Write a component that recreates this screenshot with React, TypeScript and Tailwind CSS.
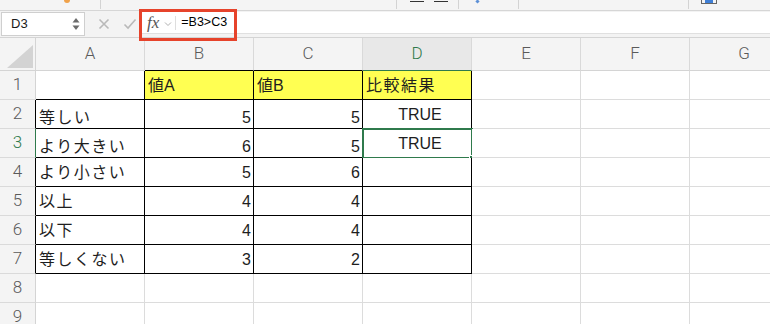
import React from "react";

type Cell = { text?: string; align?: "left" | "right" | "center"; yellow?: boolean; jp?: boolean };

const COLS = ["A", "B", "C", "D", "E", "F", "G"];

const DATA: Cell[][] = [
  [{}, { text: "値A", yellow: true }, { text: "値B", yellow: true }, { text: "比較結果", yellow: true, jp: true }],
  [{ text: "等しい", jp: true }, { text: "5", align: "right" }, { text: "5", align: "right" }, { text: "TRUE", align: "center" }],
  [{ text: "より大きい", jp: true }, { text: "6", align: "right" }, { text: "5", align: "right" }, { text: "TRUE", align: "center" }],
  [{ text: "より小さい", jp: true }, { text: "5", align: "right" }, { text: "6", align: "right" }, {}],
  [{ text: "以上", jp: true }, { text: "4", align: "right" }, { text: "4", align: "right" }, {}],
  [{ text: "以下", jp: true }, { text: "4", align: "right" }, { text: "4", align: "right" }, {}],
  [{ text: "等しくない", jp: true }, { text: "3", align: "right" }, { text: "2", align: "right" }, {}],
  [],
  [],
];

const inRegion = (r: number, c: number) =>
  (r === 0 && c >= 1 && c <= 3) || (r >= 1 && r <= 6 && c >= 0 && c <= 3);

function Ribbon() {
  return (
    <div className="flex h-[11px] bg-[#f4f4f4] border-b border-[#d6d6d6]">
      <div className="w-[101px] h-[9px] border-r border-[#d3d3d3] flex">
        <div className="ml-[64px] w-[6px] h-[3px] rounded-b-full bg-[#f0a24a]" />
      </div>
      <div className="w-[296px] h-[9px] border-r border-[#d3d3d3]" />
      <div className="w-[62px] h-[9px] border-r border-[#d3d3d3] flex gap-[10px] pl-[13px] pt-[1px]">
        <div className="w-[14px] h-[1px] bg-[#333]" />
        <div className="w-[14px] h-[1px] bg-[#333]" />
      </div>
      <div className="w-[60px] h-[9px] border-r border-[#d3d3d3] flex">
        <div className="ml-[17px] w-[3px] h-[3px] bg-[#5b8fd6] rotate-45" />
      </div>
      <div className="w-[170px] h-[9px] border-r border-[#d3d3d3]" />
      <div className="flex-1 h-[9px] flex">
        <div className="ml-[12px] w-[16px] h-[4px] border-b border-l border-r border-[#666] flex justify-center">
          <div className="w-[8px] h-[3px] bg-[#3f7fd6]" />
        </div>
      </div>
    </div>
  );
}

function FormulaBar() {
  return (
    <div className="relative flex h-[27px] bg-[#f3f3f3] border-b border-[#d4d4d4]">
      <div className="ml-[1px] mt-[1px] w-[84px] h-[24px] bg-white border border-[#cfcfcf] flex items-center">
        <span className="pl-[9px] flex-1 text-[13px] text-[#1a1a1a] font-['Liberation_Sans',sans-serif]">D3</span>
        <svg width="8" height="14" viewBox="0 0 8 14" className="mr-[4px]">
          <polygon points="4,1 7.5,5.5 0.5,5.5" fill="#6b6b6b" />
          <polygon points="4,13 7.5,8.5 0.5,8.5" fill="#6b6b6b" />
        </svg>
      </div>
      <div className="w-[54px] flex items-center">
        <svg width="12" height="12" viewBox="0 0 12 12" className="ml-[13px]">
          <path d="M1.5 1.5 L10.5 10.5 M10.5 1.5 L1.5 10.5" stroke="#b9b9b9" strokeWidth="1.6" fill="none" />
        </svg>
        <svg width="14" height="12" viewBox="0 0 14 12" className="ml-[13px]">
          <path d="M1.5 6.5 L5 10 L12.5 1.5" stroke="#b9b9b9" strokeWidth="1.6" fill="none" />
        </svg>
      </div>
      <div className="flex-1 mt-[1px] h-[22px] bg-white border-b border-[#e0e0e0] flex items-center">
        <span className="ml-[8px] font-['Liberation_Serif',serif] italic text-[17px] text-[#555] leading-none">fx</span>
        <svg width="8" height="6" viewBox="0 0 8 6" className="ml-[5px] mt-[2px]">
          <path d="M1 1.5 L4 4.5 L7 1.5" stroke="#b0b0b0" strokeWidth="1" fill="none" />
        </svg>
        <div className="ml-[3px] w-[1px] h-[14px] bg-[#dedede]" />
        <span className="ml-[5px] text-[12.5px] text-black font-['Liberation_Sans',sans-serif]">=B3&gt;C3</span>
      </div>
      <div className="absolute left-[139px] top-[-2px] w-[98px] h-[32px] border-[3px] border-[#e6432b]" />
    </div>
  );
}

function Grid() {
  const cells: React.ReactNode[] = [];
  cells.push(
    <div key="corner" className="bg-[#f4f4f4] border-r border-b border-[#d4d4d4] flex items-end justify-end pr-[2px] pb-[2px]">
      <svg width="26" height="23" viewBox="0 0 26 23">
        <polygon points="26,0 26,23 0,23" fill="#d3d3d3" />
      </svg>
    </div>
  );
  COLS.forEach((col, c) => {
    const sel = c === 3;
    const bottom = sel ? "border-b-[#2f7a4c]" : inRegion(0, c) ? "border-b-black" : "border-b-[#d4d4d4]";
    cells.push(
      <div
        key={"h" + col}
        className={`${sel ? "bg-[#e8e8e8] text-[#2f7a4c]" : "bg-[#f4f4f4] text-[#5a5a5a]"} border-r border-r-[#d9d9d9] border-b ${bottom} flex items-center justify-center font-['Roboto',sans-serif] font-light text-[17px]`}
      >
        {col}
      </div>
    );
  });
  cells.push(<div key="hrest" className="bg-[#f4f4f4] border-b border-[#d4d4d4]" />);

  for (let r = 0; r < 9; r++) {
    const selRow = r === 2;
    const rhRight = selRow ? "border-r-[#2f7a4c]" : inRegion(r, 0) ? "border-r-black" : "border-r-[#d4d4d4]";
    cells.push(
      <div
        key={"r" + r}
        className={`bg-[#f4f4f4] ${selRow ? "text-[#2f7a4c]" : "text-[#5a5a5a]"} border-r ${rhRight} border-b border-b-[#dadada] flex items-center justify-center font-['Roboto',sans-serif] font-light text-[17px]`}
      >
        {r + 1}
      </div>
    );
    for (let c = 0; c < 7; c++) {
      const cell = DATA[r][c] || {};
      const right = inRegion(r, c) || inRegion(r, c + 1) ? "border-r-black" : "border-r-[#dcdcdc]";
      const bottom = inRegion(r, c) || inRegion(r + 1, c) ? "border-b-black" : "border-b-[#dcdcdc]";
      const low = (r === 1 || r === 2) && c <= 2;
      const justify =
        cell.align === "right" ? "justify-end pr-[2px]" : cell.align === "center" ? "justify-center pl-[6px]" : "justify-start pl-[3px]";
      cells.push(
        <div
          key={`c${r}-${c}`}
          className={`relative border-r ${right} border-b ${bottom} ${cell.yellow ? "bg-[#ffff52]" : "bg-white"} flex items-center ${justify} ${low ? "pt-[8px]" : "pt-[2px]"} ${cell.jp ? "tracking-[1.5px]" : ""} text-[16px] text-[#1e1e1e] font-['Liberation_Sans','Noto_Sans_CJK_JP',sans-serif] whitespace-nowrap`}
        >
          {cell.text}
          {r === 2 && c === 3 && (
            <>
              <div className="absolute left-[-1px] top-[-1px] right-[-2px] bottom-[-2px] border-2 border-[#2f7a4c]" />
              <div className="absolute right-[-4px] bottom-[-4px] w-[6px] h-[6px] bg-[#2f7a4c] border border-white" />
            </>
          )}
        </div>
      );
    }
    cells.push(<div key={"rest" + r} className="border-b border-[#dcdcdc] bg-white" />);
  }

  return (
    <div className="grid grid-cols-[36px_repeat(7,109px)_1fr] grid-rows-[33px_repeat(9,29px)]">
      {cells}
    </div>
  );
}

export default function App() {
  return (
    <div className="w-[770px] h-[324px] overflow-hidden bg-white">
      <Ribbon />
      <FormulaBar />
      <Grid />
    </div>
  );
}
